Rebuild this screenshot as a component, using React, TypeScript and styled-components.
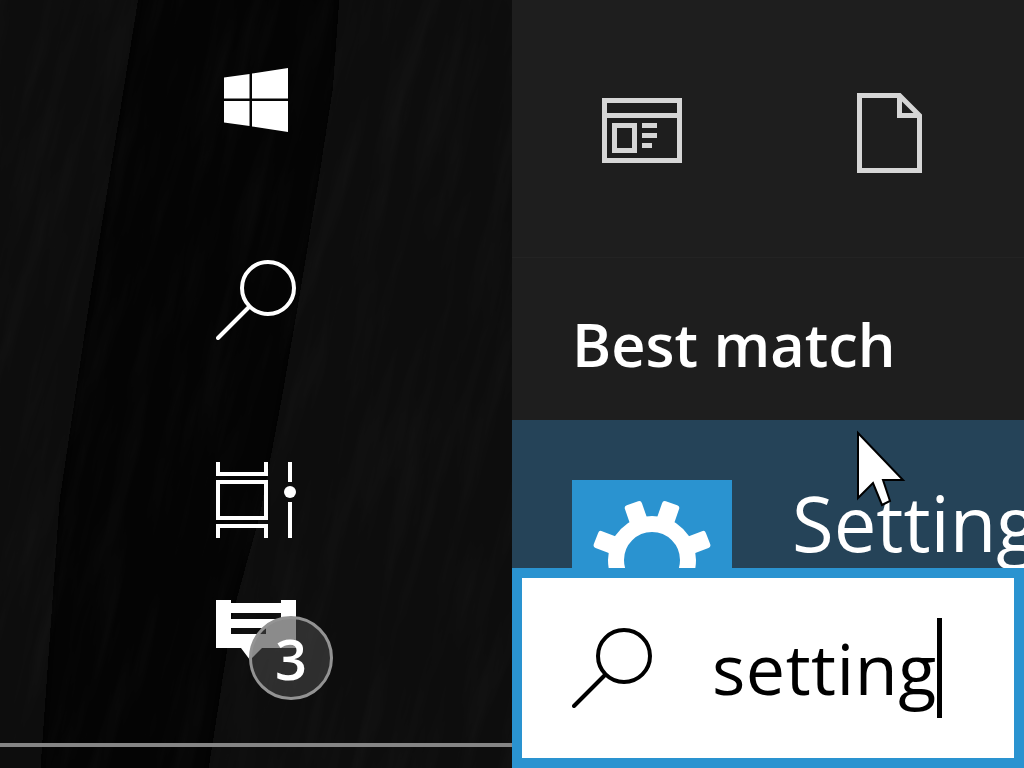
import styled, { createGlobalStyle } from 'styled-components';

const GlobalStyle = createGlobalStyle`
  html, body {
    margin: 0;
    padding: 0;
    background: #000;
  }
  body {
    font-family: "Open Sans", "Noto Sans", "Liberation Sans", sans-serif;
  }
`;

const Screen = styled.div`
  position: relative;
  display: grid;
  grid-template-columns: 512px 512px;
  width: 1024px;
  height: 768px;
  overflow: hidden;
`;

const Desktop = styled.div`
  position: relative;
  display: flex;
  flex-direction: column;
  background: #040404;
  overflow: hidden;
`;

const Wallpaper = styled.svg`
  position: absolute;
  inset: 0;
`;

const Rail = styled.nav`
  position: relative;
  display: grid;
  grid-template-rows: 200px 200px 140px 1fr;
  justify-items: start;
  padding: 60px 0 0 216px;
  flex: 1;
`;

const RailIcon = styled.svg`
  display: block;
  width: 80px;
  height: 80px;
  color: #fff;
`;

const NotifyButton = styled.div`
  position: relative;
  width: 80px;
  height: 80px;
`;

const Badge = styled.span`
  position: absolute;
  left: 33px;
  top: 16px;
  width: 84px;
  height: 84px;
  box-sizing: border-box;
  display: flex;
  align-items: center;
  justify-content: center;
  border-radius: 50%;
  border: 3px solid #939393;
  background: rgba(68, 68, 68, 0.62);
  color: #fff;
  font-size: 56px;
  font-weight: 600;
  line-height: 1;
`;

const EdgeLine = styled.div`
  position: relative;
  height: 4px;
  margin-bottom: 21px;
  background: #858585;
`;

const Panel = styled.section`
  position: relative;
  display: flex;
  flex-direction: column;
  background: #1e1e1e;
  overflow: hidden;
`;

const AppRow = styled.div`
  display: flex;
  align-items: flex-start;
  gap: 175px;
  height: 258px;
  flex: none;
  box-sizing: border-box;
  padding: 93px 0 0 90px;
  border-bottom: 1px solid #232323;
`;

const CategoryIcon = styled.svg<{ $drop?: number }>`
  display: block;
  color: #d6d6d6;
  flex: none;
  margin-top: ${(p) => p.$drop ?? 0}px;
`;

const Heading = styled.h2`
  margin: 0;
  height: 162px;
  flex: none;
  box-sizing: border-box;
  padding: 46px 0 0 60px;
  color: #fff;
  font-size: 59.5px;
  font-weight: 600;
  line-height: 80px;
  white-space: nowrap;
`;

const ResultRow = styled.div`
  flex: 1;
  min-height: 0;
  display: flex;
  align-items: flex-start;
  padding: 60px 0 0 60px;
  gap: 60px;
  background: #254358;
  overflow: hidden;
`;

const Tile = styled.div`
  width: 160px;
  height: 160px;
  flex: none;
  background: #2a93d0;
`;

const ResultName = styled.span`
  color: #fff;
  font-size: 76px;
  font-weight: 500;
  line-height: 85px;
  white-space: nowrap;
`;

const SearchBox = styled.div`
  flex: none;
  height: 200px;
  box-sizing: border-box;
  display: flex;
  align-items: center;
  gap: 60px;
  padding: 0 0 0 50px;
  border: 10px solid #2a93d0;
  background: #fff;
`;

const SearchIcon = styled.svg`
  display: block;
  flex: none;
  width: 80px;
  height: 80px;
  color: #000;
`;

const SearchText = styled.span`
  position: relative;
  color: #000;
  font-size: 70px;
  letter-spacing: 0.5px;
  line-height: 100px;
  white-space: nowrap;
`;

const Caret = styled.span`
  position: absolute;
  top: 0;
  right: -5px;
  width: 5px;
  height: 100px;
  background: #000;
`;

const Pointer = styled.svg`
  position: absolute;
  left: 850px;
  top: 425px;
  width: 64px;
  height: 90px;
`;

function MagnifierPaths() {
  return (
    <>
      <circle cx="52" cy="28" r="26" fill="none" stroke="currentColor" strokeWidth="4" />
      <path d="M33 47 L2 78" fill="none" stroke="currentColor" strokeWidth="4" strokeLinecap="round" />
    </>
  );
}

const gearTeeth = [-120, -69, -19, 19, 69, 120, 180];

export default function App() {
  return (
    <Screen>
      <GlobalStyle />
      <Desktop>
        <Wallpaper width="512" height="768" viewBox="0 0 512 768">
          <defs>
            <filter id="streaks" x="0" y="0" width="100%" height="100%">
              <feTurbulence type="fractalNoise" baseFrequency="0.05 0.006" numOctaves="4" seed="7" />
              <feColorMatrix values="0 0 0 0 1  0 0 0 0 1  0 0 0 0 1  0.9 0 0 0 -0.38" />
            </filter>
            <filter id="soft">
              <feGaussianBlur stdDeviation="4" />
            </filter>
          </defs>
          <rect width="512" height="768" fill="#040404" />
          <g filter="url(#soft)">
            <path d="M-10 -10 L140 -10 L90 300 L60 500 L40 780 L-10 780 Z" fill="#080808" />
            <path d="M340 -10 L333 88 L320 172 L300 294 L283 392 L260 515 L233 613 L207 780 L530 780 L530 -10 Z" fill="#111111" />
            <path d="M530 452 L480 465 L430 515 L425 600 L420 695 L530 725 Z" fill="#0a0a0a" />
          </g>
          <g transform="rotate(14 256 384)" opacity="0.05">
            <rect x="-150" y="-150" width="812" height="1068" filter="url(#streaks)" />
          </g>
        </Wallpaper>
        <Rail>
          <RailIcon viewBox="0 0 80 80">
            <path fill="currentColor" d="M8 17.5 L33.5 14 L33.5 38.5 L8 38.5 Z M36 13.6 L72 8 L72 38.5 L36 38.5 Z M8 41 L33.5 41 L33.5 66 L8 62.5 Z M36 41 L72 41 L72 72 L36 66.5 Z" />
          </RailIcon>
          <RailIcon viewBox="0 0 80 80">
            <MagnifierPaths />
          </RailIcon>
          <RailIcon viewBox="0 0 80 80">
            <g fill="none" stroke="currentColor" strokeWidth="4">
              <path d="M2 2 V14 H50 V2" />
              <path d="M2 22 H50 V58 H2 Z" />
              <path d="M2 78 V66 H50 V78" />
              <path d="M74 2 V22 M74 42 V78" />
            </g>
            <circle cx="74" cy="32" r="6" fill="currentColor" />
          </RailIcon>
          <NotifyButton>
            <RailIcon viewBox="0 0 80 80">
              <path fill="currentColor" fillRule="evenodd" d="M0 0 H15 V3 H65 V0 H80 V48 H46 L34 60 L25 48 H0 Z M15 13 V19 H65 V13 Z M15 28 V34 H50 V28 Z" />
            </RailIcon>
            <Badge>3</Badge>
          </NotifyButton>
        </Rail>
        <EdgeLine />
      </Desktop>
      <Panel>
        <AppRow>
          <CategoryIcon $drop={5} width="80" height="65" viewBox="0 0 80 65">
            <g fill="none" stroke="currentColor" strokeWidth="5">
              <path d="M2.5 2.5 H77.5 V62.5 H2.5 Z" />
              <path d="M2.5 17.5 H77.5" />
              <path d="M12.5 27.5 H32.5 V52.5 H12.5 Z" />
            </g>
            <path fill="currentColor" d="M40 25 H55 V30 H40 Z M40 35 H55 V40 H40 Z M40 45 H50 V50 H40 Z" />
          </CategoryIcon>
          <CategoryIcon width="65" height="80" viewBox="0 0 65 80">
            <path fill="none" stroke="currentColor" strokeWidth="5" d="M2.5 2.5 H42.5 L62.5 22.5 V77.5 H2.5 Z" />
            <path fill="none" stroke="currentColor" strokeWidth="5" d="M42.5 2.5 V22.5 H62.5" />
          </CategoryIcon>
        </AppRow>
        <Heading>Best match</Heading>
        <ResultRow>
          <Tile>
            <svg width="160" height="160" viewBox="0 0 160 160">
              <circle cx="80" cy="80" r="36" fill="none" stroke="#fff" strokeWidth="16" />
              {gearTeeth.map((a) => (
                <rect key={a} x="71" y="20" width="18" height="30" rx="3" fill="#fff" transform={`rotate(${a} 80 80)`} />
              ))}
            </svg>
          </Tile>
          <ResultName>Setting</ResultName>
        </ResultRow>
        <SearchBox>
          <SearchIcon viewBox="0 0 80 80">
            <MagnifierPaths />
          </SearchIcon>
          <SearchText>
            setting
            <Caret />
          </SearchText>
        </SearchBox>
      </Panel>
      <Pointer viewBox="0 0 64 90">
        <path
          d="M8 8 L53 55 L33 55 L40 76 L32 80 L23 58 L8 73 Z"
          fill="#fff"
          stroke="#000"
          strokeWidth="2"
          strokeLinejoin="miter"
        />
      </Pointer>
    </Screen>
  );
}
